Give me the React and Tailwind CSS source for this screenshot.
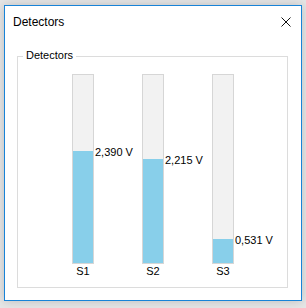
import React from "react";

const bars = [
  { name: "S1", value: "2,390 V", h: 112 },
  { name: "S2", value: "2,215 V", h: 104 },
  { name: "S3", value: "0,531 V", h: 24 },
];

export default function App() {
  return (
    <div
      className="w-[306px] h-[308px] bg-[#e6e6e6] pl-[4px] pt-[5px] overflow-hidden"
      style={{ fontFamily: '"Liberation Sans", Arial, sans-serif' }}
    >
      <div className="w-[298px] h-[296px] border border-[#1883d7] bg-white flex flex-col shadow-[0_0_10px_rgba(0,0,0,0.18)]">
        <div className="h-[32px] flex items-center justify-between pl-[8px] pr-[10px] shrink-0">
          <span className="text-[12px] leading-[14px] text-black">Detectors</span>
          <svg width="10" height="10" viewBox="0 0 10 10" className="block">
            <path d="M0.5 0.5 L9.5 9.5 M9.5 0.5 L0.5 9.5" stroke="#111" strokeWidth="1" fill="none" />
          </svg>
        </div>
        <div className="relative mt-[18px] ml-[12px] w-[271px] h-[232px] border border-[#dcdcdc]">
          <span className="absolute left-[5px] top-[-8px] px-[3px] bg-white text-[11px] leading-[13px] text-black">
            Detectors
          </span>
          <div className="flex gap-[48px] pl-[54px] pt-[17px]">
            {bars.map((b) => (
              <div key={b.name} className="flex flex-col items-center w-[22px]">
                <div className="relative w-[22px] h-[190px] border border-[#d6d6d6] bg-[#f2f2f2] flex flex-col justify-end">
                  <div className="w-full bg-[#88cfea]" style={{ height: b.h }} />
                  <span
                    className="absolute left-[22px] whitespace-nowrap text-[11px] leading-[13px] text-black"
                    style={{ top: 188 - b.h - 5 }}
                  >
                    {b.value}
                  </span>
                </div>
                <span className="mt-[1px] text-[11px] leading-[13px] text-black">{b.name}</span>
              </div>
            ))}
          </div>
        </div>
      </div>
    </div>
  );
}
